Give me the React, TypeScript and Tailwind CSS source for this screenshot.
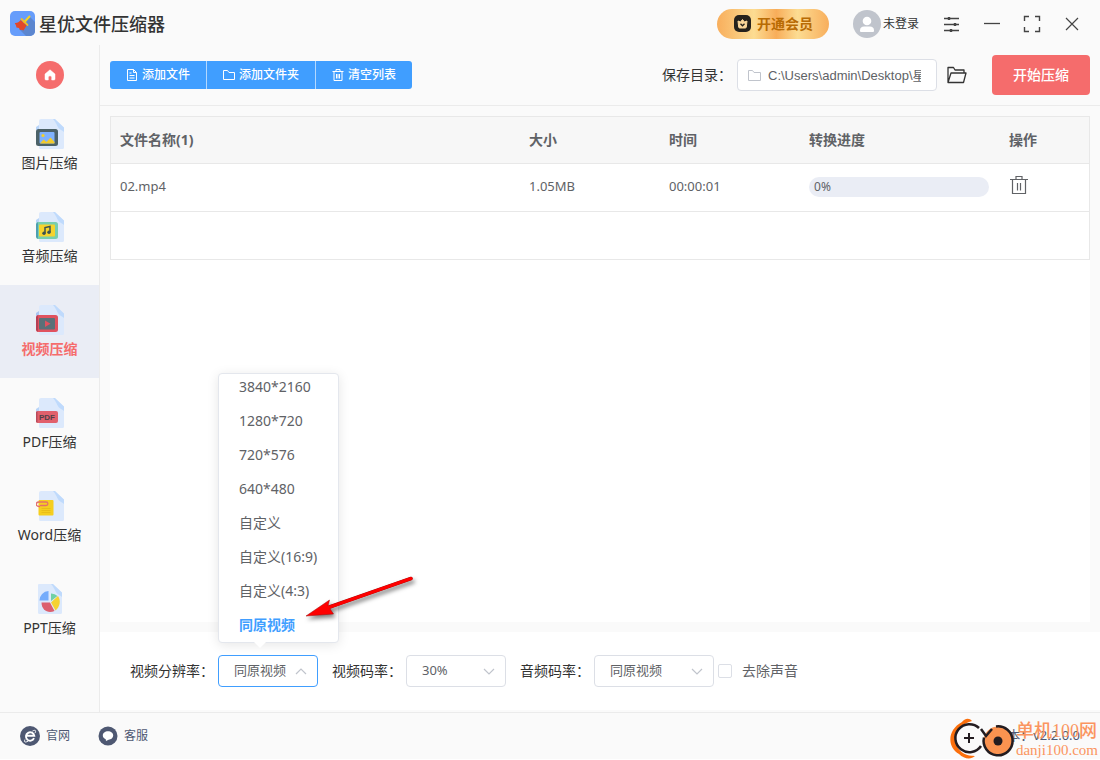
import { useState, type ReactNode } from "react";

const sidebarItems = [
  { id: "image", label: "图片压缩" },
  { id: "audio", label: "音频压缩" },
  { id: "video", label: "视频压缩" },
  { id: "pdf", label: "PDF压缩" },
  { id: "word", label: "Word压缩" },
  { id: "ppt", label: "PPT压缩" },
];

const resolutions = [
  "3840*2160",
  "1280*720",
  "720*576",
  "640*480",
  "自定义",
  "自定义(16:9)",
  "自定义(4:3)",
  "同原视频",
];

const files = [{ name: "02.mp4", size: "1.05MB", time: "00:00:01", progress: 0 }];

function Logo() {
  return (
    <svg width="25" height="25" viewBox="0 0 25 25" aria-hidden="true">
      <rect width="25" height="25" rx="5" fill="#669dfb" />
      <path d="M20 6l5 5v9a5 5 0 0 1-5 5h-4L9 18z" fill="#5c86cf" />
      <path d="M19.500 5.500l-5.500 6" stroke="#f6d21f" strokeWidth="2" strokeLinecap="round" />
      <path d="M11.500 8l6 6" stroke="#f2bd24" strokeWidth="1.800" strokeLinecap="round" />
      <path d="M10.800 9l5.700 5.500c-1 1.500-1.500 3-3 5l-2-.8-1.500.3-1-2-2.500-.5-.5-2L4.800 12c2.500.3 4-1 6-3z" fill="#e2472a" />
    </svg>
  );
}

function NavIcon({ type }: { type: string }) {
  return (
    <svg width="28" height="30" viewBox="0 0 28 30" aria-hidden="true">
      {type !== "ppt" && (
        <>
          <path d="M5 0h13.500L28 9v19.500a1.500 1.500 0 0 1-1.500 1.500h-22A1.500 1.500 0 0 1 3 28.500V2a2 2 0 0 1 2-2z" fill="#dce9fc" />
          <path d="M17 0h2L28 8.500V13c-1.500-1.500-3.500-2-5-3.500S20 3 17 0z" fill="#bfdafc" />
        </>
      )}
      {type === "image" && (
        <>
          <path d="M0 8l3-2v5H0z" fill="#b9d5f9" />
          <rect y="10" width="22" height="17" rx="2.500" fill="#4c6268" />
          <rect x="3.500" y="13" width="15" height="11.500" rx="1" fill="#7fb2fd" />
          <circle cx="7" cy="16.500" r="1.600" fill="#f5d126" />
          <path d="M4 24.500l3.500-4 3 2.500 4-4.500 4 4.500v1.500z" fill="#f3cb2c" />
        </>
      )}
      {type === "audio" && (
        <>
          <path d="M0 8l3-2v5H0z" fill="#b9d5f9" />
          <rect y="10" width="22" height="17" rx="2.500" fill="#78ceae" />
          <path d="M0 12v13l2 2V10z" fill="#4f9fb0" />
          <rect x="3" y="12.500" width="16" height="12" rx="1" fill="#f6d32d" />
          <path d="M9 21v-5.500l5-1V20" stroke="#3c5350" strokeWidth="1.500" fill="none" />
          <circle cx="8" cy="21.300" r="1.700" fill="#3c5350" />
          <circle cx="13" cy="20.300" r="1.700" fill="#3c5350" />
        </>
      )}
      {type === "video" && (
        <>
          <path d="M0 8l3-2v5H0z" fill="#a9c6f2" />
          <rect y="10" width="22" height="17" rx="2.500" fill="#e0525f" />
          <path d="M0 12v13l2 2V10z" fill="#b63f55" />
          <rect x="3" y="13" width="16" height="11.500" rx="1" fill="#5a7078" />
          <path d="M9 15.500v6.500l5.500-3.200z" fill="#e0525f" />
        </>
      )}
      {type === "pdf" && (
        <>
          <path d="M0 11l3-2v5H0z" fill="#b9d5f9" />
          <rect y="13" width="22" height="12" rx="2" fill="#e1606c" />
          <path d="M0 14v10l1.500 1V13z" fill="#b84a5b" />
          <text x="11" y="22" textAnchor="middle" fill="#504048" className="font-['Liberation_Sans',sans-serif] text-[8px] font-bold">
            PDF
          </text>
        </>
      )}
      {type === "word" && (
        <>
          <rect x="2.500" y="9" width="15" height="15.500" rx="1" fill="#f5ce1f" />
          <path d="M5.500 17.500h9M5.500 19.500h9M5.500 21.500h9" stroke="#e6b916" strokeWidth=".8" />
          <path d="M3.500 15.500C-1 15.500-.5 11 3 11h7c2.500 0 2.500 3.500 0 3.500H4.500" stroke="#e4706c" strokeWidth="1.300" fill="none" strokeLinecap="round" />
        </>
      )}
      {type === "ppt" && (
        <>
          <path d="M3 0h13.500L26 9v19.500a1.500 1.500 0 0 1-1.500 1.500h-21A1.500 1.500 0 0 1 2 28.500V1a1 1 0 0 1 1-1z" fill="#dce9fc" />
          <path d="M15 0h2L26 8.500V13c-1.500-1.500-3.500-2-5-3.500S18 3 15 0z" fill="#bfdafc" />
          <path d="M12.500 16.500H3.500a9.500 9.500 0 0 1 9-9.500z" fill="#74acfb" />
          <path d="M15 17V9.500a9 9 0 0 1 6.500 2.500z" fill="#6fd0a6" />
          <path d="M15 18.500l7-6.500c3 4.500 2.200 10.500-2.500 14.500z" fill="#f5d231" />
          <path d="M5.500 18.500h8.500l4.500 8.500C12 30 5.500 26 5.500 18.500z" fill="#dc5f6e" />
        </>
      )}
    </svg>
  );
}

function Stroke({ size, box, children }: { size: number; box: number; children: ReactNode }) {
  return (
    <svg
      width={size}
      height={size}
      viewBox={`0 0 ${box} ${box}`}
      fill="none"
      stroke="currentColor"
      aria-hidden="true"
    >
      {children}
    </svg>
  );
}

function WindowButton({ label, children }: { label: string; children: ReactNode }) {
  return (
    <button aria-label={label} className="flex h-8 w-10 items-center justify-center text-[#444]">
      <Stroke size={18} box={18}>
        {children}
      </Stroke>
    </button>
  );
}

function ToolButton({ label, children }: { label: string; children: ReactNode }) {
  return (
    <button className="flex h-7 items-center gap-1 px-4 text-xs font-medium hover:bg-[#66b1ff]">
      <Stroke size={12} box={12}>
        {children}
      </Stroke>
      {label}
    </button>
  );
}

type SelectProps = {
  id: string;
  label: string;
  value: string;
  options: string[];
  onChange: (value: string) => void;
  open?: boolean;
  wide?: boolean;
  children?: ReactNode;
};

function SelectField({ id, label, value, options, onChange, open, wide, children }: SelectProps) {
  return (
    <div className="flex items-center gap-1">
      <label htmlFor={id} className="text-sm text-[#333]">
        {label}
      </label>
      <div className={wide ? "relative w-[120px]" : "relative w-[100px]"}>
        <select
          id={id}
          value={value}
          onChange={(e) => onChange(e.target.value)}
          className={`block h-8 w-full appearance-none rounded border bg-white pr-7 pl-[15px] text-[13px] text-[#606266] outline-none ${
            open ? "border-[#409eff]" : "border-[#dcdfe6]"
          }`}
        >
          {options.map((option) => (
            <option key={option}>{option}</option>
          ))}
        </select>
        <span className="pointer-events-none absolute inset-y-0 right-[11px] flex items-center text-[#c0c4cc]">
          <Stroke size={12} box={12}>
            <path d={open ? "M1 9l5-5 5 5" : "M1 4l5 5 5-5"} strokeWidth="1.200" />
          </Stroke>
        </span>
        {children}
      </div>
    </div>
  );
}

export default function App() {
  const [active, setActive] = useState("video");
  const [resolution, setResolution] = useState("同原视频");
  const [videoRate, setVideoRate] = useState("30%");
  const [audioRate, setAudioRate] = useState("同原视频");
  const [muted, setMuted] = useState(false);

  return (
    <div
      lang="zh-CN"
      className="flex min-h-screen flex-col border-b border-white bg-[#fafafa] font-['Noto_Sans','Noto_Sans_CJK_SC',sans-serif] text-[#333]"
    >
      {/* Title bar */}
      <header className="flex h-[45px] items-center justify-between pt-0.5 pr-2 pl-2.5">
        <div className="flex items-center gap-1">
          <Logo />
          <h1 className="text-lg font-medium">星优文件压缩器</h1>
        </div>
        <div className="flex items-center">
          <button className="mr-6 flex h-[30px] items-center gap-[5px] rounded-full bg-[linear-gradient(90deg,#f8ae5c_0%,#fcdc92_33%,#f8ad5a_53%,#fcdc92_72%,#f8ae5c_100%)] px-4 text-sm font-bold text-[#b86b04]">
            <svg width="19" height="19" viewBox="0 0 19 19" aria-hidden="true">
              <rect x="1" y="1" width="17" height="17" rx="5" fill="#26221c" />
              <path d="M5 7l2.500 1 2-2.500 2 2.500L14 7l-.7 6.200a1 1 0 0 1-1 .8H6.700a1 1 0 0 1-1-.8z" fill="#fbd79a" stroke="#fbd79a" strokeLinejoin="round" />
              <path d="M7.500 9.800l2 2 2-2" stroke="#26221c" strokeWidth="1.300" fill="none" />
            </svg>
            开通会员
          </button>
          <button className="mr-[13px] flex items-center gap-0.5 text-xs">
            <svg width="28" height="28" viewBox="0 0 28 28" aria-hidden="true">
              <circle cx="14" cy="14" r="14" fill="#c0c4cc" />
              <circle cx="14" cy="11" r="4.300" fill="#fff" />
              <path d="M7 20.500c0-3 1.800-4 4-4h6c2.200 0 4 1 4 4v.5a1 1 0 0 1-1 1H8a1 1 0 0 1-1-1z" fill="#fff" />
            </svg>
            未登录
          </button>
          <WindowButton label="设置">
            <path d="M1 3.500h15M1 9.500h15M1 15.500h15" strokeWidth="1.300" />
            <path d="M6 2v3M12 8v3M8 14v3" strokeWidth="2.400" />
          </WindowButton>
          <WindowButton label="最小化">
            <path d="M1 8.500h16" strokeWidth="1.300" />
          </WindowButton>
          <WindowButton label="最大化">
            <path d="M1.500 6V1.500H6M12 1.500h4.500V6M16.500 12v4.500H12M6 16.500H1.500V12" strokeWidth="1.400" />
          </WindowButton>
          <WindowButton label="关闭">
            <path d="M3 3l12 12M15 3L3 15" strokeWidth="1.200" />
          </WindowButton>
        </div>
      </header>

      <div className="flex flex-1">
        {/* Sidebar */}
        <nav className="w-[100px] shrink-0 border-r border-[#ebebeb]">
          <div className="flex h-[54px] justify-center pt-4">
            <button aria-label="首页" className="flex size-7 items-center justify-center rounded-full bg-[#f56c6c]">
              <svg width="12" height="12" viewBox="0 0 12 12" aria-hidden="true">
                <path d="M6 .8l5 4.200v5a1 1 0 0 1-1 1H7.700V8.500a1.700 1.700 0 0 0-3.400 0V11H2a1 1 0 0 1-1-1V5z" fill="#fff" stroke="#fff" strokeWidth=".5" strokeLinejoin="round" />
              </svg>
            </button>
          </div>
          {sidebarItems.map((item) => (
            <button
              key={item.id}
              onClick={() => setActive(item.id)}
              className={`flex h-[93px] w-full flex-col items-center gap-1 pt-5 text-sm ${
                active === item.id ? "bg-[#eaedf5] font-bold text-[#f56c6c]" : ""
              }`}
            >
              <NavIcon type={item.id} />
              {item.label}
            </button>
          ))}
        </nav>

        <main className="flex min-w-0 flex-1 flex-col">
          {/* Toolbar */}
          <div className="flex h-[61px] items-center justify-between border-b border-[#ebebeb] px-2.5">
            <div className="flex divide-x divide-[#b3d8ff] overflow-hidden rounded-[3px] bg-[#409eff] text-white">
              <ToolButton label="添加文件">
                <path d="M1.500.5h6l3 3v8h-9z" />
                <path d="M7.500.5v3h3M3.500 4h2M3.500 6.500h5M3.500 9h5" />
              </ToolButton>
              <ToolButton label="添加文件夹">
                <path d="M.5 10.500v-9h4l1.500 2h5.500v7z" />
              </ToolButton>
              <ToolButton label="清空列表">
                <path d="M.5 2.500h11M4 2.500v-2h4v2M2 2.500v9h8v-9M4.500 5v4.500M6 5v4.500M7.500 5v4.500" />
              </ToolButton>
            </div>
            <div className="flex items-center">
              <label htmlFor="savePath" className="mr-[5px] text-sm">
                保存目录：
              </label>
              <div className="relative w-[200px]">
                <span className="absolute inset-y-0 left-[11px] flex items-center text-[#c0c4cc]">
                  <Stroke size={13} box={13}>
                    <path d="M.5 11.500v-10h4l1.500 2h6.500v8z" />
                  </Stroke>
                </span>
                <input
                  id="savePath"
                  defaultValue="C:\Users\admin\Desktop\星优文件压缩器"
                  className="block h-8 w-full rounded border border-[#dcdfe6] bg-white pr-[15px] pb-0.5 pl-[30px] font-['Liberation_Sans','Noto_Sans_CJK_SC',sans-serif] text-[13px] text-[#606266] outline-none"
                />
              </div>
              <button aria-label="打开目录" className="mr-[25px] ml-2.5">
                <Stroke size={20} box={20}>
                  <path d="M1 17.500V2.500h5.500l1.500 2.500h9v3M1 17.500L4 8h15l-2.500 9.500z" strokeWidth="1.300" strokeLinejoin="round" />
                </Stroke>
              </button>
              <button className="h-10 rounded bg-[#f56c6c] px-[21px] text-sm font-medium text-white hover:bg-[#f78989]">
                开始压缩
              </button>
            </div>
          </div>

          {/* File list */}
          <div className="mx-2.5 mt-2.5 flex-1 bg-white">
            <div className="border border-[#e8e8e8] pb-[47px]">
              <table className="w-full table-fixed text-left text-[#606266]">
                <thead>
                  <tr className="h-[46px] border-b border-[#e8e8e8] bg-[#f7f7f7] text-sm">
                    <th className="px-[9px]">文件名称({files.length})</th>
                    <th className="w-[140px] px-[9px]">大小</th>
                    <th className="w-[140px] px-[9px]">时间</th>
                    <th className="w-[200px] px-[9px]">转换进度</th>
                    <th className="w-[89px] px-[9px]">操作</th>
                  </tr>
                </thead>
                <tbody>
                  {files.map((file) => (
                    <tr key={file.name} className="h-12 border-b border-[#e8e8e8] text-[13px]">
                      <td className="px-[9px]">{file.name}</td>
                      <td className="px-[9px]">{file.size}</td>
                      <td className="px-[9px]">{file.time}</td>
                      <td className="px-[9px]">
                        <div className="relative h-5 w-[180px] overflow-hidden rounded-full bg-[#eaedf5]">
                          <div className="absolute inset-y-0 left-0 bg-[#409eff]" style={{ width: `${file.progress}%` }} />
                          <span className="relative block pl-[5px] text-xs leading-5">{file.progress}%</span>
                        </div>
                      </td>
                      <td className="px-[9px]">
                        <button aria-label="删除" className="mb-1 block">
                          <Stroke size={20} box={20}>
                            <path d="M1 4.500h18M7 4.500v-3h6v3M3.500 4.500v14h13v-14" strokeWidth="1.200" />
                            <path d="M8.500 8v7.500M11.500 8v7.500" strokeWidth="1.200" />
                          </Stroke>
                        </button>
                      </td>
                    </tr>
                  ))}
                </tbody>
              </table>
            </div>
          </div>

          {/* Output options */}
          <div className="mt-2.5 mb-0.5 flex h-[78px] items-center gap-[14px] bg-white pl-[30px]">
            <SelectField
              id="resolution"
              label="视频分辨率："
              value={resolution}
              options={resolutions}
              onChange={setResolution}
              open
            >
              <div className="absolute bottom-11 left-0 z-10 w-[121px]">
                <ul className="flex h-[270px] flex-col justify-end overflow-hidden rounded border border-[#e4e7ed] bg-white text-sm shadow-[0_2px_12px_rgba(0,0,0,0.1)]">
                  {resolutions.map((item) => (
                    <li key={item} className="shrink-0">
                      <button
                        onClick={() => setResolution(item)}
                        className={`block h-[34px] w-full px-5 text-left whitespace-nowrap ${
                          item === resolution ? "font-bold text-[#409eff]" : "text-[#606266]"
                        }`}
                      >
                        {item}
                      </button>
                    </li>
                  ))}
                </ul>
                <svg className="absolute top-full left-9 -mt-px" width="12" height="6" viewBox="0 0 12 6" aria-hidden="true">
                  <path d="M0 0h12L6 6z" fill="#fff" />
                </svg>
                {/* Pointer to the selected item */}
                <svg
                  className="pointer-events-none absolute bottom-4 left-[84px] drop-shadow-[2px_3px_2px_rgba(0,0,0,0.5)]"
                  width="116"
                  height="52"
                  viewBox="0 0 116 52"
                  aria-hidden="true"
                >
                  <path d="M109 3.500L26 32.500" stroke="#a00808" strokeWidth="3.500" strokeLinecap="round" />
                  <path d="M4 41L27.500 25l-1.500 6 5.500 8z" fill="#fe0000" stroke="#a00808" strokeWidth=".5" />
                  <path d="M109 3.500L25 33" stroke="#fe0000" strokeWidth="3" strokeLinecap="round" />
                </svg>
              </div>
            </SelectField>
            <SelectField
              id="videoRate"
              label="视频码率："
              value={videoRate}
              options={["10%", "30%", "50%", "80%"]}
              onChange={setVideoRate}
            />
            <div className="flex items-center gap-1">
              <SelectField
                id="audioRate"
                label="音频码率："
                value={audioRate}
                options={["同原视频", "128kbps", "64kbps"]}
                onChange={setAudioRate}
                wide
              />
              <label className="flex items-center gap-2.5 text-sm text-[#606266]">
                <input
                  type="checkbox"
                  checked={muted}
                  onChange={(e) => setMuted(e.target.checked)}
                  className="size-[14px] appearance-none rounded-xs border border-[#dcdfe6] bg-white checked:border-[#409eff] checked:bg-[#409eff]"
                />
                去除声音
              </label>
            </div>
          </div>
        </main>
      </div>

      {/* Footer */}
      <footer className="relative flex h-[47px] items-center justify-between border-t border-[#ebebeb] pr-5 pl-5 text-[#4e5872]">
        <div className="flex items-center gap-7 text-xs">
          <a href="#site" className="flex items-center gap-1.5">
            <svg width="20" height="20" viewBox="0 0 20 20" fill="none" aria-hidden="true">
              <circle cx="10" cy="10" r="10" fill="#4e5872" />
              <path d="M14 12.200a4.200 4.200 0 1 1 .3-2.400H6.500" stroke="#fff" strokeWidth="1.900" />
              <path d="M5 13.500c-1.500 3 .5 3 3 1.700M12.500 5c3-1.500 3.800-.3 2.500 2" stroke="#fff" strokeWidth="1" />
            </svg>
            官网
          </a>
          <a href="#service" className="flex items-center gap-1.5">
            <svg width="20" height="20" viewBox="0 0 20 20" aria-hidden="true">
              <circle cx="10" cy="10" r="9.500" fill="#4e5872" />
              <path d="M10 5.300c3 0 5.200 1.800 5.200 4.200 0 2.300-2 4-4.600 4.200l-2.600 1.300-.3-1.700C6 12.500 4.800 11.200 4.800 9.500c0-2.400 2.200-4.200 5.200-4.200z" fill="#fff" />
            </svg>
            客服
          </a>
        </div>
        <p className="text-[13px]">版本：v2.2.0.0</p>

        {/* Site badge */}
        <div className="absolute right-0.5 bottom-0 flex items-end gap-0.5 text-[#fb9560]">
          <svg width="64" height="42" viewBox="0 0 64 42" fill="none" aria-hidden="true">
            <circle cx="19" cy="21" r="14" fill="#fafafa" />
            <path d="M22 4c-3-4-8-2-10 1C-3 13-3 30 9 37c5 5 12 6 16 2-8 0-15-3-18-10C3 19 9 7 22 4z" fill="#fb6f0c" />
            <path d="M29 11A14 14 0 1 0 31 29" stroke="#231c20" strokeWidth="2.500" />
            <path d="M19 16v10M14 21h10" stroke="#231c20" strokeWidth="2" />
            <circle cx="48" cy="24" r="14.500" fill="#fb9350" />
            <path d="M46 9.500a14.500 14.500 0 1 1-12 11M31 12l5 7 6-7" stroke="#231c20" strokeWidth="2.500" />
            <circle cx="48" cy="24" r="4.500" fill="#231c20" />
          </svg>
          <div className="font-['Liberation_Serif','Noto_Sans_CJK_SC',serif]">
            <div className="text-lg leading-5 font-medium">单机100网</div>
            <div className="text-[15px] leading-[18px]">danji100.com</div>
          </div>
        </div>
      </footer>
    </div>
  );
}
